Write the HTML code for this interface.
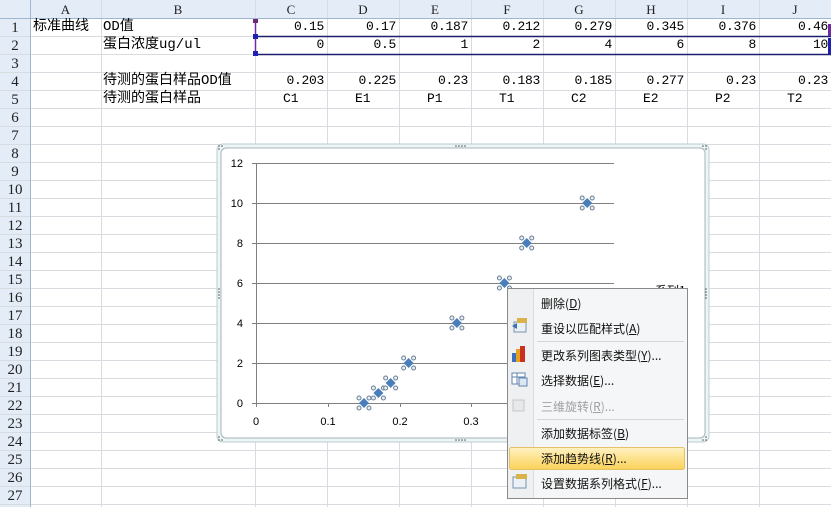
<!DOCTYPE html>
<html><head><meta charset="utf-8"><style>
body{margin:0;width:831px;height:507px;overflow:hidden;background:#fff;font-family:"Liberation Mono","Noto Sans CJK SC",monospace;position:relative}
.a{position:absolute}
.t{position:absolute;font-size:13px;line-height:18px;color:#000;white-space:nowrap;font-family:"Liberation Mono","Noto Sans CJK SC",monospace}
.num{text-align:right;width:68px;letter-spacing:-0.3px}
.hd{position:absolute;top:0;height:18px;line-height:19px;text-align:center;font-size:13px;color:#222;font-family:"Liberation Serif",serif}
.rh{position:absolute;left:0;width:30px;text-align:center;font-size:15px;color:#222;font-family:"Liberation Serif",serif}
.mi{position:absolute;left:541px;font-size:12px;color:#111;font-family:"Noto Sans CJK SC",sans-serif}
</style></head><body>
<svg class="a" style="left:0;top:0" width="831" height="507">
<rect x="0" y="0" width="831" height="18" fill="#e4ecf7"/>
<rect x="0" y="0" width="30" height="507" fill="#e4ecf7"/>
<g id="grid" stroke="#d8dbe0" stroke-width="1"></g>
<line x1="30.5" y1="0" x2="30.5" y2="507" stroke="#9eb6ce"/>
<line x1="0" y1="18.5" x2="831" y2="18.5" stroke="#9eb6ce"/>
<line x1="256" y1="36.5" x2="831" y2="36.5" stroke="#1f1f6f" stroke-width="1.5"/>
<line x1="256" y1="54.5" x2="831" y2="54.5" stroke="#1f1f6f" stroke-width="1.5"/>
<line x1="255.5" y1="19" x2="255.5" y2="54" stroke="#6e2aa0" stroke-width="1.5"/>
<rect x="253" y="19" width="5" height="4" fill="#6e2a7a"/>
<rect x="253" y="34" width="5" height="5" fill="#2020b0"/>
<rect x="253" y="51" width="5" height="5" fill="#2020b0"/>
<rect x="828" y="24" width="3" height="12" fill="#6e2aa0"/>
<rect x="828" y="38" width="3" height="16" fill="#2020b0"/>
<rect x="217" y="144" width="492" height="298" rx="6" fill="#eef5f7" stroke="#b8ccd4"/>
<rect x="221" y="148" width="484" height="290" rx="5" fill="#fff" stroke="#a6b4ba"/>
<g fill="#555"><circle cx="456" cy="146" r=".8"/><circle cx="459" cy="146" r=".8"/><circle cx="462" cy="146" r=".8"/><circle cx="465" cy="146" r=".8"/>
<circle cx="456" cy="440" r=".8"/><circle cx="459" cy="440" r=".8"/><circle cx="462" cy="440" r=".8"/><circle cx="465" cy="440" r=".8"/>
<circle cx="219" cy="289" r=".8"/><circle cx="219" cy="292" r=".8"/><circle cx="219" cy="295" r=".8"/><circle cx="219" cy="298" r=".8"/>
<circle cx="706" cy="289" r=".8"/><circle cx="706" cy="292" r=".8"/><circle cx="706" cy="295" r=".8"/><circle cx="706" cy="298" r=".8"/>
<circle cx="219" cy="146" r=".8"/><circle cx="222" cy="146" r=".8"/><circle cx="219" cy="149" r=".8"/>
<circle cx="703" cy="146" r=".8"/><circle cx="706" cy="146" r=".8"/><circle cx="706" cy="149" r=".8"/>
<circle cx="219" cy="440" r=".8"/><circle cx="222" cy="440" r=".8"/><circle cx="219" cy="437" r=".8"/>
<circle cx="703" cy="440" r=".8"/><circle cx="706" cy="440" r=".8"/><circle cx="706" cy="437" r=".8"/></g>
<g stroke="#808080" stroke-width="1">
<line x1="252" y1="163.5" x2="614" y2="163.5"/><line x1="252" y1="203.5" x2="614" y2="203.5"/>
<line x1="252" y1="243.5" x2="614" y2="243.5"/><line x1="252" y1="283.5" x2="614" y2="283.5"/>
<line x1="252" y1="323.5" x2="614" y2="323.5"/><line x1="252" y1="363.5" x2="614" y2="363.5"/>
<line x1="252" y1="403.5" x2="614" y2="403.5"/><line x1="256.5" y1="163" x2="256.5" y2="407"/>
<line x1="328.5" y1="403" x2="328.5" y2="407"/><line x1="400.5" y1="403" x2="400.5" y2="407"/><line x1="471.5" y1="403" x2="471.5" y2="407"/>
</g>
<g font-family="Liberation Sans,sans-serif" font-size="11" fill="#000" text-anchor="end">
<text x="243" y="167">12</text><text x="243" y="207">10</text><text x="243" y="247">8</text><text x="243" y="287">6</text>
<text x="243" y="327">4</text><text x="243" y="367">2</text><text x="243" y="407">0</text></g>
<g font-family="Liberation Sans,sans-serif" font-size="11" fill="#000" text-anchor="middle">
<text x="256" y="425">0</text><text x="328" y="425">0.1</text><text x="400" y="425">0.2</text><text x="471" y="425">0.3</text></g>
<text x="655" y="295" font-family="Noto Sans CJK SC,sans-serif" font-size="12">系列1</text>
<g id="pts"></g>
<rect x="507.5" y="288.5" width="180" height="210" fill="#f5f6f7" stroke="#8a8a8a"/>
<rect x="508" y="289" width="25" height="209" fill="#eef0f2"/>
<line x1="533.5" y1="289" x2="533.5" y2="498" stroke="#dcdcdc"/>
<line x1="537" y1="341.5" x2="684" y2="341.5" stroke="#d6d6d6"/>
<line x1="537" y1="419.5" x2="684" y2="419.5" stroke="#d6d6d6"/>
<defs><linearGradient id="hl" x1="0" y1="0" x2="0" y2="1"><stop offset="0" stop-color="#fff1c4"/><stop offset=".5" stop-color="#fde28c"/><stop offset="1" stop-color="#fbd15a"/></linearGradient></defs>
<rect x="509.5" y="447.5" width="175" height="22" rx="2" fill="url(#hl)" stroke="#e5c365"/>
<rect x="514" y="322" width="12" height="10" fill="#eaf0f6" stroke="#7a93ae"/><path d="M512 326l5-3v6z" fill="#3a6fb0"/><rect x="517" y="318" width="10" height="5" fill="#d9b24a"/>
<rect x="512" y="353" width="4" height="9" fill="#3a6fc0"/><rect x="516" y="349" width="4" height="13" fill="#e5a020"/><rect x="520" y="346" width="5" height="16" fill="#c83020"/>
<rect x="512" y="373" width="13" height="11" fill="#fff" stroke="#5f86b0"/><line x1="512" y1="377" x2="525" y2="377" stroke="#5f86b0"/><line x1="517" y1="373" x2="517" y2="384" stroke="#5f86b0"/><rect x="519" y="378" width="8" height="8" fill="#dde7f2" stroke="#5f86b0"/>
<rect x="513" y="400" width="11" height="11" fill="#e6e8ea" stroke="#c4c8cc"/>
<rect x="513" y="477" width="13" height="11" fill="#eaf0f6" stroke="#7a93ae"/><rect x="516" y="474" width="11" height="5" fill="#d9b24a"/>
</svg>
<script>
var g=document.getElementById('grid'),s='';
var cols=[101,255,327,399,471,543,615,687,759];
for(var i=0;i<cols.length;i++){s+='<line x1="'+(cols[i]+.5)+'" y1="0" x2="'+(cols[i]+.5)+'" y2="507"/>';}
for(var r=1;r<=27;r++){var y=18+r*18+.5;s+='<line x1="0" y1="'+y+'" x2="831" y2="'+y+'"/>';}
g.innerHTML=s;
var p=document.getElementById('pts'),q='';
[[.15,0],[.17,.5],[.187,1],[.212,2],[.279,4],[.345,6],[.376,8],[.46,10]].forEach(function(d){
var x=256+720*d[0],y=403-20*d[1];
q+='<path d="M'+x+' '+(y-5)+'l5 5-5 5-5-5z" fill="#4a7ebb"/>';
[[-5,-5],[5,-5],[-5,5],[5,5]].forEach(function(o){q+='<circle cx="'+(x+o[0])+'" cy="'+(y+o[1])+'" r="2" fill="#e8eef4" stroke="#6a7f95"/>';});
});
p.innerHTML=q;
</script>
<div class="hd" style="left:30px;width:71px">A</div>
<div class="hd" style="left:101px;width:154px">B</div>
<div class="hd" style="left:255px;width:72px">C</div>
<div class="hd" style="left:327px;width:72px">D</div>
<div class="hd" style="left:399px;width:72px">E</div>
<div class="hd" style="left:471px;width:72px">F</div>
<div class="hd" style="left:543px;width:72px">G</div>
<div class="hd" style="left:615px;width:72px">H</div>
<div class="hd" style="left:687px;width:72px">I</div>
<div class="hd" style="left:759px;width:72px">J</div>
<div id="rh"></div>
<script>
var h='';for(var r=1;r<=27;r++){h+='<div class="rh" style="top:'+(18+(r-1)*18+1)+'px;line-height:18px">'+r+'</div>';}
document.getElementById('rh').innerHTML=h;
</script>
<div class="t" style="left:33px;top:18px;font-size:14px">标准曲线</div>
<div class="t" style="left:103px;top:18px;font-size:14px">OD值</div>
<div class="t" style="left:103px;top:36px;font-size:14px">蛋白浓度ug/ul</div>
<div class="t" style="left:103px;top:72px;font-size:14px">待测的蛋白样品OD值</div>
<div class="t" style="left:103px;top:90px;font-size:14px">待测的蛋白样品</div>
<div id="cells"></div>
<script>
var r1=['0.15','0.17','0.187','0.212','0.279','0.345','0.376','0.46'],r2=['0','0.5','1','2','4','6','8','10'],r4=['0.203','0.225','0.23','0.183','0.185','0.277','0.23','0.23'],r5=['C1','E1','P1','T1','C2','E2','P2','T2'];
var c='';for(var i=0;i<8;i++){var x=255+72*i;
c+='<div class="t num" style="left:'+(x+1)+'px;top:18px">'+r1[i]+'</div>';
c+='<div class="t num" style="left:'+(x+1)+'px;top:36px">'+r2[i]+'</div>';
c+='<div class="t num" style="left:'+(x+1)+'px;top:72px">'+r4[i]+'</div>';
c+='<div class="t" style="left:'+(x+28)+'px;top:90px">'+r5[i]+'</div>';}
document.getElementById('cells').innerHTML=c;
</script>
<div class="mi" style="top:295px">删除(<u>D</u>)</div>
<div class="mi" style="top:320px">重设以匹配样式(<u>A</u>)</div>
<div class="mi" style="top:347px">更改系列图表类型(<u>Y</u>)...</div>
<div class="mi" style="top:372px">选择数据(<u>E</u>)...</div>
<div class="mi" style="top:398px;color:#a0a0a0">三维旋转(<u>R</u>)...</div>
<div class="mi" style="top:425px">添加数据标签(<u>B</u>)</div>
<div class="mi" style="top:450px">添加趋势线(<u>R</u>)...</div>
<div class="mi" style="top:475px">设置数据系列格式(<u>F</u>)...</div>
</body></html>
